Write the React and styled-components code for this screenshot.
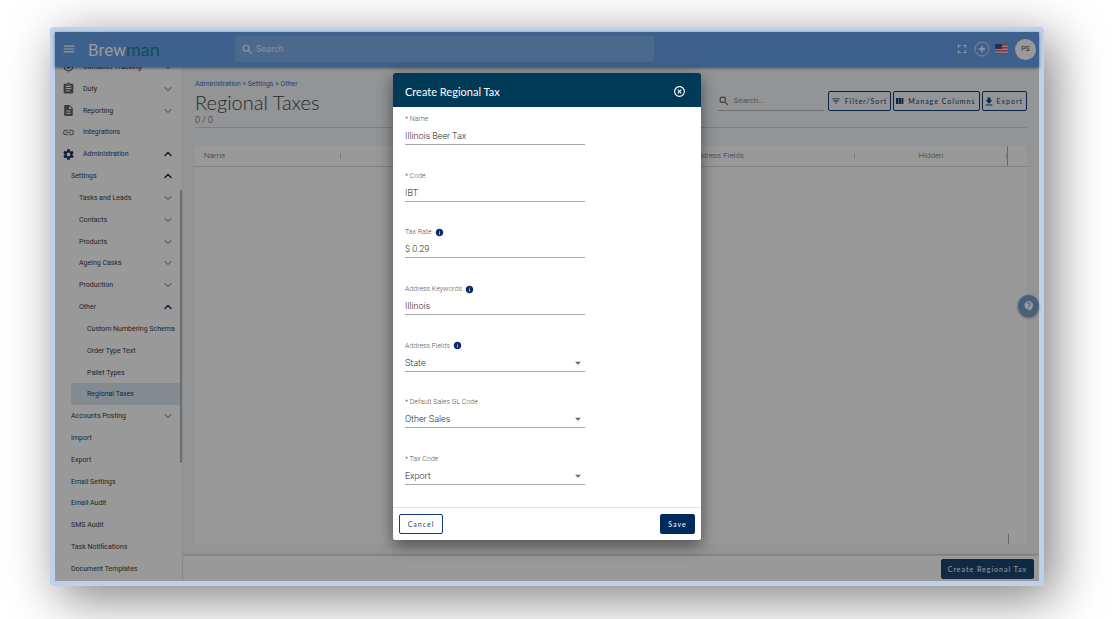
import React, { useState } from "react";
import styled, { createGlobalStyle } from "styled-components";
import { ChevronDown, ChevronUp } from "lucide-react";
import {
	MdMenu,
	MdSearch,
	MdFullscreen,
	MdGpsFixed,
	MdAssignment,
	MdDescription,
	MdLink,
	MdSettings,
	MdFilterList,
	MdContactSupport,
	MdInfo,
	MdHighlightOff,
	MdArrowDropDown,
} from "react-icons/md";

const navItems = [
	{ label: "Container Tracking", icon: MdGpsFixed, level: 0, arrow: "down" },
	{ label: "Duty", icon: MdAssignment, level: 0, arrow: "down" },
	{ label: "Reporting", icon: MdDescription, level: 0, arrow: "down" },
	{ label: "Integrations", icon: MdLink, level: 0 },
	{ label: "Administration", icon: MdSettings, level: 0, arrow: "up" },
	{ label: "Settings", level: 1, arrow: "up" },
	{ label: "Tasks and Leads", level: 2, arrow: "down" },
	{ label: "Contacts", level: 2, arrow: "down" },
	{ label: "Products", level: 2, arrow: "down" },
	{ label: "Ageing Casks", level: 2, arrow: "down" },
	{ label: "Production", level: 2, arrow: "down" },
	{ label: "Other", level: 2, arrow: "up" },
	{ label: "Custom Numbering Schema", level: 3 },
	{ label: "Order Type Text", level: 3 },
	{ label: "Pallet Types", level: 3 },
	{ label: "Regional Taxes", level: 3, current: true },
	{ label: "Accounts Posting", level: 1, arrow: "down" },
	{ label: "Import", level: 1 },
	{ label: "Export", level: 1 },
	{ label: "Email Settings", level: 1 },
	{ label: "Email Audit", level: 1 },
	{ label: "SMS Audit", level: 1 },
	{ label: "Task Notifications", level: 1 },
	{ label: "Document Templates", level: 1 },
];

const fields = [
	{ id: "name", label: "* Name" },
	{ id: "code", label: "* Code" },
	{ id: "rate", label: "Tax Rate", info: true },
	{ id: "keywords", label: "Address Keywords", info: true },
	{ id: "addressFields", label: "Address Fields", info: true, select: true },
	{ id: "glCode", label: "* Default Sales GL Code", select: true },
	{ id: "taxCode", label: "* Tax Code", select: true },
];

const Header = () => (
	<TopBar>
		<IconButton type="button" aria-label="Menu">
			<MdMenu size={14} />
		</IconButton>
		<Brand href="#">
			Brew<span>man</span>
		</Brand>
		<HeaderSearch>
			<MdSearch size={13} />
			<input type="text" placeholder="Search" aria-label="Search" />
		</HeaderSearch>
		<HeaderTools>
			<IconButton type="button" aria-label="Full screen">
				<MdFullscreen size={14} />
			</IconButton>
			<IconButton type="button" aria-label="Add">
				<PlusCircle />
			</IconButton>
			<IconButton type="button" aria-label="Language">
				<Flag />
			</IconButton>
			<Avatar type="button">PS</Avatar>
		</HeaderTools>
	</TopBar>
);

const PlusCircle = () => (
	<svg width="16" height="16" viewBox="0 0 16 16" fill="none" aria-hidden="true">
		<circle cx="8" cy="8" r="7" stroke="#dbe7f7" strokeWidth="0.9" />
		<path d="M8 4.8v6.4M4.8 8h6.4" stroke="white" strokeWidth="1.3" />
	</svg>
);

const Flag = () => (
	<svg width="13" height="10" viewBox="0 0 13 10" aria-hidden="true">
		<rect width="13" height="10" fill="#e8d3da" />
		{[0, 3, 6, 9].map((y) => (
			<rect key={y} y={y} width="13" height="1.5" fill="#d8606a" />
		))}
		<rect width="7" height="5" fill="#3f4f8c" />
	</svg>
);

const Sidebar = () => (
	<SideNav>
		<NavList>
			{navItems.map((item) => {
				const Icon = item.icon;
				return (
					<NavRow key={item.label}>
						<NavLink
							href="#"
							$level={item.level}
							$open={item.arrow === "up" || item.current}
							$current={item.current}
						>
							{Icon && <Icon size={13} />}
							<span>{item.label}</span>
							{item.arrow === "down" && <ChevronDown size={12} />}
							{item.arrow === "up" && <ChevronUp size={12} strokeWidth={3} />}
						</NavLink>
					</NavRow>
				);
			})}
		</NavList>
		<ScrollThumb />
	</SideNav>
);

const Main = () => (
	<Content>
		<PageHead>
			<div>
				<Crumbs>
					<a href="#">Administration</a> &gt; <a href="#">Settings</a> &gt;{" "}
					<a href="#">Other</a>
				</Crumbs>
				<PageTitle>Regional Taxes</PageTitle>
				<Count>0 / 0</Count>
			</div>
			<Tools>
				<TableSearch>
					<MdSearch size={12} />
					<input type="text" placeholder="Search..." aria-label="Search table" />
				</TableSearch>
				<OutlineButton type="button">
					<MdFilterList size={10} />
					Filter/Sort
				</OutlineButton>
				<OutlineButton type="button">
					<svg width="8" height="8" viewBox="0 0 8 8" fill="currentColor">
						<path d="M0 1h2.2v6H0zM2.7 1h2.2v6H2.7zM5.4 1h2v6h-2z" />
					</svg>
					Manage Columns
				</OutlineButton>
				<OutlineButton type="button">
					<svg width="8" height="9" viewBox="4 2 16 19" fill="currentColor">
						<path d="M19 9h-4V3H9v6H5l7 7 7-7zM5 18v2h14v-2H5z" />
					</svg>
					Export
				</OutlineButton>
			</Tools>
		</PageHead>
		<TableCard>
			<Table>
				<colgroup>
					<col style={{ width: "17.5%" }} />
					<col style={{ width: "20.6%" }} />
					<col style={{ width: "20.6%" }} />
					<col style={{ width: "20.6%" }} />
					<col style={{ width: "18.4%" }} />
					<col />
				</colgroup>
				<thead>
					<tr>
						<th>Name</th>
						<th />
						<th />
						<th>Address Fields</th>
						<CenterTh>Hidden</CenterTh>
						<LastTh />
					</tr>
				</thead>
			</Table>
			<TableEnd />
		</TableCard>
		<Footer>
			<SolidButton type="button">Create Regional Tax</SolidButton>
		</Footer>
	</Content>
);

const Dialog = () => {
	const [values, setValues] = useState({
		name: "Illinois Beer Tax",
		code: "IBT",
		rate: "$ 0.29",
		keywords: "Illinois",
		addressFields: "State",
		glCode: "Other Sales",
		taxCode: "Export",
	});

	const update = (ev) => {
		setValues({ ...values, [ev.target.id]: ev.target.value });
	};

	return (
		<Backdrop>
			<Panel
				role="dialog"
				aria-labelledby="dialog-title"
				onSubmit={(ev) => ev.preventDefault()}
			>
				<PanelHead>
					<h2 id="dialog-title">Create Regional Tax</h2>
					<IconButton type="button" aria-label="Close">
						<MdHighlightOff size={13} />
					</IconButton>
				</PanelHead>
				<Fields>
					{fields.map((field) => (
						<Field key={field.id}>
							<FieldLabel htmlFor={field.id}>
								{field.label}
								{field.info && <MdInfo size={9} />}
							</FieldLabel>
							{field.select ? (
								<SelectWrap>
									<Select
										id={field.id}
										value={values[field.id]}
										onChange={update}
									>
										<option>{values[field.id]}</option>
									</Select>
									<MdArrowDropDown size={14} />
								</SelectWrap>
							) : (
								<TextInput
									type="text"
									id={field.id}
									value={values[field.id]}
									onChange={update}
								/>
							)}
						</Field>
					))}
				</Fields>
				<PanelFoot>
					<CancelButton type="button">Cancel</CancelButton>
					<SaveButton type="submit">Save</SaveButton>
				</PanelFoot>
			</Panel>
		</Backdrop>
	);
};

const App = () => {
	return (
		<Stage>
			<GlobalStyle />
			<Frame>
				<Header />
				<Body>
					<Sidebar />
					<Main />
				</Body>
				<HelpButton type="button" aria-label="Help">
					<MdContactSupport size={12} />
				</HelpButton>
				<Dialog />
			</Frame>
		</Stage>
	);
};

const GlobalStyle = createGlobalStyle`
	* {
		box-sizing: border-box;
	}
	body {
		margin: 0;
		background: white;
		font-family: Roboto, "Open Sans", sans-serif;
		color: #444;
	}
	button, input, select {
		font-family: inherit;
		color: inherit;
	}
	a {
		color: inherit;
		text-decoration: none;
	}
	svg {
		flex-shrink: 0;
	}
`;
const Stage = styled.div`
	display: flex;
	min-height: 100vh;
	padding: 27px 68px 33px 50px;
	overflow: hidden;
`;
const Frame = styled.div`
	position: relative;
	display: flex;
	flex-direction: column;
	flex: 1;
	min-width: 0;
	border: 5px solid #bfd1ea;
	border-radius: 3px;
	box-shadow: 10px 12px 50px rgba(0, 0, 0, 0.5);
`;
const TopBar = styled.header`
	z-index: 1;
	display: flex;
	align-items: center;
	height: 35px;
	padding: 0 3px 1px 7px;
	background-color: #68a1e9;
	color: white;
	box-shadow: 0 1px 3px rgba(0, 0, 0, 0.5);
`;
const IconButton = styled.button`
	display: flex;
	align-items: center;
	padding: 0;
	border: none;
	background: none;
	color: inherit;
`;
const Brand = styled.a`
	width: 148px;
	padding-left: 12px;
	font-size: 17px;
	line-height: 18px;

	span {
		color: #1f8098;
		font-family: Lato, sans-serif;
		font-size: 18px;
	}
`;
const HeaderSearch = styled.label`
	display: flex;
	align-items: center;
	flex: 0 1 419px;
	height: 26px;
	margin-left: 11px;
	padding: 0 6px;
	border-radius: 2px;
	background-color: rgba(255, 255, 255, 0.15);

	input {
		flex: 1;
		border: none;
		background: none;
		font-size: 9px;
		outline: none;
	}
	input::placeholder {
		color: #e6edf7;
	}
`;
const HeaderTools = styled.div`
	display: flex;
	align-items: center;
	gap: 5px;
	margin-left: auto;
`;
const Avatar = styled.button`
	width: 21px;
	height: 21px;
	margin-left: 2px;
	padding: 0;
	border: none;
	border-radius: 50%;
	background-color: white;
	color: #444;
	font-size: 7px;
`;
const Body = styled.div`
	display: flex;
	flex: 1;
	min-height: 0;
`;
const SideNav = styled.nav`
	display: flex;
	flex: 0 0 128px;
	overflow: hidden;
	border-right: 1px solid #e8ebef;
	background-color: white;
`;
/* the list is scrolled, so its first row runs under the top bar */
const NavList = styled.ul`
	display: flex;
	flex-direction: column;
	flex: 1;
	min-width: 0;
	margin: -11px 0 1px;
	padding: 0;
	list-style: none;
`;
const NavRow = styled.li`
	display: flex;
	flex: 1;
	padding-left: 7px;
`;
const NavLink = styled.a`
	display: flex;
	align-items: center;
	flex: 1;
	min-width: 0;
	margin-left: ${({ $level }) => ($level > 0 ? 9 : 0)}px;
	padding-left: ${({ $level }) => ($level > 1 ? ($level - 1) * 8 : 0)}px;
	padding-right: 6px;
	background-color: ${({ $current }) => ($current ? "#dbe6f0" : "transparent")};
	color: ${({ $open }) => ($open ? "#1c4678" : "#3c3c3c")};
	font-size: 7px;
	white-space: nowrap;

	span {
		flex: 1;
		min-width: 0;
		margin-left: ${({ $level }) => ($level === 0 ? 8 : 0)}px;
	}
	svg {
		color: ${({ $open }) => ($open ? "#0c3560" : "#666")};
	}
`;
const ScrollThumb = styled.div`
	flex: 0 0 2px;
	margin: 123px 0 118px;
	border-radius: 1px;
	background-color: #b4b4b4;
`;
const Content = styled.main`
	display: flex;
	flex-direction: column;
	flex: 1;
	min-width: 0;
	background-color: #f4f7fb;
`;
const PageHead = styled.div`
	display: flex;
	justify-content: space-between;
	margin: 12px 12px 0;
	border-bottom: 1px solid #cfd2d6;
`;
const Crumbs = styled.div`
	color: #3470bf;
	font-size: 7px;
	line-height: 11px;
`;
const PageTitle = styled.h1`
	margin: 0;
	color: #444;
	font-family: Lato, sans-serif;
	font-size: 20px;
	font-weight: 300;
	line-height: 24px;
`;
const Count = styled.div`
	color: #555;
	font-size: 9px;
	font-weight: 300;
	line-height: 13px;
`;
const Tools = styled.div`
	display: flex;
	align-items: center;
	gap: 2px;
	height: 44px;
`;
const TableSearch = styled.label`
	display: flex;
	align-items: center;
	gap: 2px;
	width: 106px;
	height: 20px;
	margin-right: 2px;
	border-bottom: 1px solid #b5b8bd;
	color: #555;

	input {
		width: 80px;
		border: none;
		background: none;
		font-size: 8px;
		outline: none;
	}
	input::placeholder {
		color: #8d8d8d;
	}
`;
const Button = styled.button`
	display: flex;
	align-items: center;
	justify-content: center;
	height: 20px;
	border: 1px solid #0f3b76;
	border-radius: 2px;
	font-family: Lato, sans-serif;
	font-size: 7px;
	letter-spacing: 1px;
	white-space: nowrap;
`;
const OutlineButton = styled(Button)`
	gap: 4px;
	padding: 0 3px 0 2px;
	background: none;
	color: #163d6e;
`;
const SolidButton = styled(Button)`
	padding: 0 6px;
	border-color: #1a4673;
	background-color: #1a4673;
	color: white;
`;
const TableCard = styled.div`
	display: flex;
	flex-direction: column;
	justify-content: space-between;
	flex: 1;
	margin: 18px 12px 11px;
	background-color: white;
`;
const Table = styled.table`
	width: 100%;
	border-collapse: collapse;
	table-layout: fixed;

	th {
		height: 20px;
		padding: 0 9px;
		border-bottom: 1px solid #d5d8dc;
		background: linear-gradient(#d0d0d0, #d0d0d0) right center / 1px 6px no-repeat;
		color: #606060;
		font-size: 8px;
		font-weight: 300;
		text-align: left;
	}
`;
const CenterTh = styled.th`
	&& {
		text-align: center;
	}
`;
const LastTh = styled.th`
	&& {
		border-left: 1px solid #b0b0b6;
		background: none;
	}
`;
const TableEnd = styled.div`
	align-self: flex-end;
	width: 19px;
	height: 10px;
	border-left: 1px solid #b0b0b6;
`;
const Footer = styled.footer`
	display: flex;
	align-items: center;
	justify-content: flex-end;
	height: 26px;
	padding: 0 5px;
	border-top: 1px solid #dfe1e4;
	background-color: white;
	box-shadow: 0 -1px 1px rgba(0, 0, 0, 0.12);
`;
const HelpButton = styled.button`
	position: absolute;
	top: 263px;
	right: 0;
	z-index: 1;
	display: flex;
	align-items: center;
	justify-content: center;
	width: 21px;
	height: 22px;
	padding: 0;
	border: none;
	border-radius: 50%;
	background-color: #779fcb;
	color: white;
	box-shadow: 0 1px 3px rgba(0, 0, 0, 0.4);
`;
const Backdrop = styled.div`
	position: absolute;
	inset: 0;
	z-index: 2;
	display: flex;
	align-items: center;
	justify-content: center;
	background-color: rgba(0, 0, 0, 0.4);
`;
const Panel = styled.form`
	display: flex;
	flex-direction: column;
	width: 308px;
	height: 85%;
	border-radius: 2px;
	overflow: hidden;
	background-color: white;
	box-shadow: 0 5px 16px rgba(0, 0, 0, 0.5);
`;
const PanelHead = styled.div`
	display: flex;
	align-items: center;
	justify-content: space-between;
	height: 34px;
	padding: 2px 15px 0 12px;
	background-color: #003a57;
	color: white;

	h2 {
		margin: 0;
		font-family: Lato, sans-serif;
		font-size: 11px;
		font-weight: 400;
	}
`;
const Fields = styled.div`
	display: flex;
	flex-direction: column;
	flex: 1;
	padding: 3px 12px 0;
`;
const Field = styled.div`
	flex: 1;
	width: 180px;
`;
const FieldLabel = styled.label`
	display: flex;
	align-items: center;
	gap: 3px;
	height: 18px;
	color: #555;
	font-size: 7px;
	font-weight: 300;

	svg {
		color: #0a2a66;
	}
`;
const TextInput = styled.input`
	display: block;
	width: 100%;
	height: 17px;
	padding: 0;
	border: none;
	border-bottom: 1px solid #a8a8a8;
	border-radius: 0;
	background: none;
	color: #222;
	font-size: 9px;
	font-weight: 300;
	outline: none;
`;
const SelectWrap = styled.div`
	display: flex;
	align-items: center;
	border-bottom: 1px solid #a8a8a8;
	color: #666;
`;
const Select = styled.select`
	flex: 1;
	height: 16px;
	padding: 0;
	border: none;
	background: none;
	color: #222;
	font-size: 9px;
	font-weight: 300;
	appearance: none;
	outline: none;
`;
const PanelFoot = styled.div`
	display: flex;
	align-items: center;
	justify-content: space-between;
	height: 33px;
	padding: 0 6px;
	border-top: 1px solid #e2e2e2;
`;
const CancelButton = styled(Button)`
	width: 44px;
	background-color: white;
	color: #1d4478;
`;
const SaveButton = styled(Button)`
	width: 35px;
	border-color: #002a5c;
	background-color: #002a5c;
	color: white;
`;

export default App;
